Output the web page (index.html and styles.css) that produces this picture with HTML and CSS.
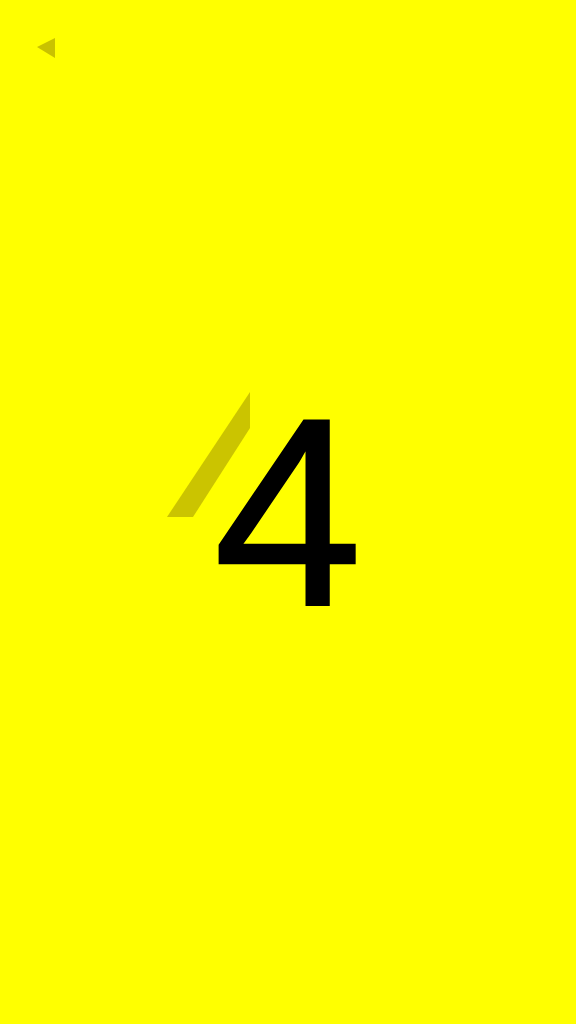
FILE: index.html
```html
<!DOCTYPE html>
<html lang="en">
<head>
<meta charset="utf-8">
<title>4</title>
<link rel="stylesheet" href="styles.css">
</head>
<body>
<main class="stage">
  <button class="back" aria-label="Back">
    <svg class="back-icon" width="20" height="22" viewBox="0 0 20 22"><polygon points="1,10 19,1 19,21"/></svg>
  </button>
  <svg class="ghost" width="576" height="1024" viewBox="0 0 576 1024" aria-hidden="true">
    <polygon points="250,392 250,428 193,517 167,517"/>
  </svg>
  <div class="number">4</div>
</main>
</body>
</html>
```
FILE: styles.css
```css
html, body {
  margin: 0;
  padding: 0;
  background: #ffff00;
}
.stage {
  position: relative;
  width: 576px;
  height: 1024px;
  display: grid;
  place-items: center;
  overflow: hidden;
}
.number {
  font-family: "Liberation Sans", Arial, sans-serif;
  font-size: 268px;
  line-height: 1;
  color: #000;
  -webkit-text-stroke: 2px #000;
  position: relative;
  z-index: 1;
}
.ghost {
  position: absolute;
  left: 0;
  top: 0;
  fill: #cbc400;
}
.back {
  position: absolute;
  left: 36px;
  top: 37px;
  padding: 0;
  border: 0;
  background: none;
  line-height: 0;
  z-index: 2;
}
.back-icon {
  fill: #c9c200;
}
```
